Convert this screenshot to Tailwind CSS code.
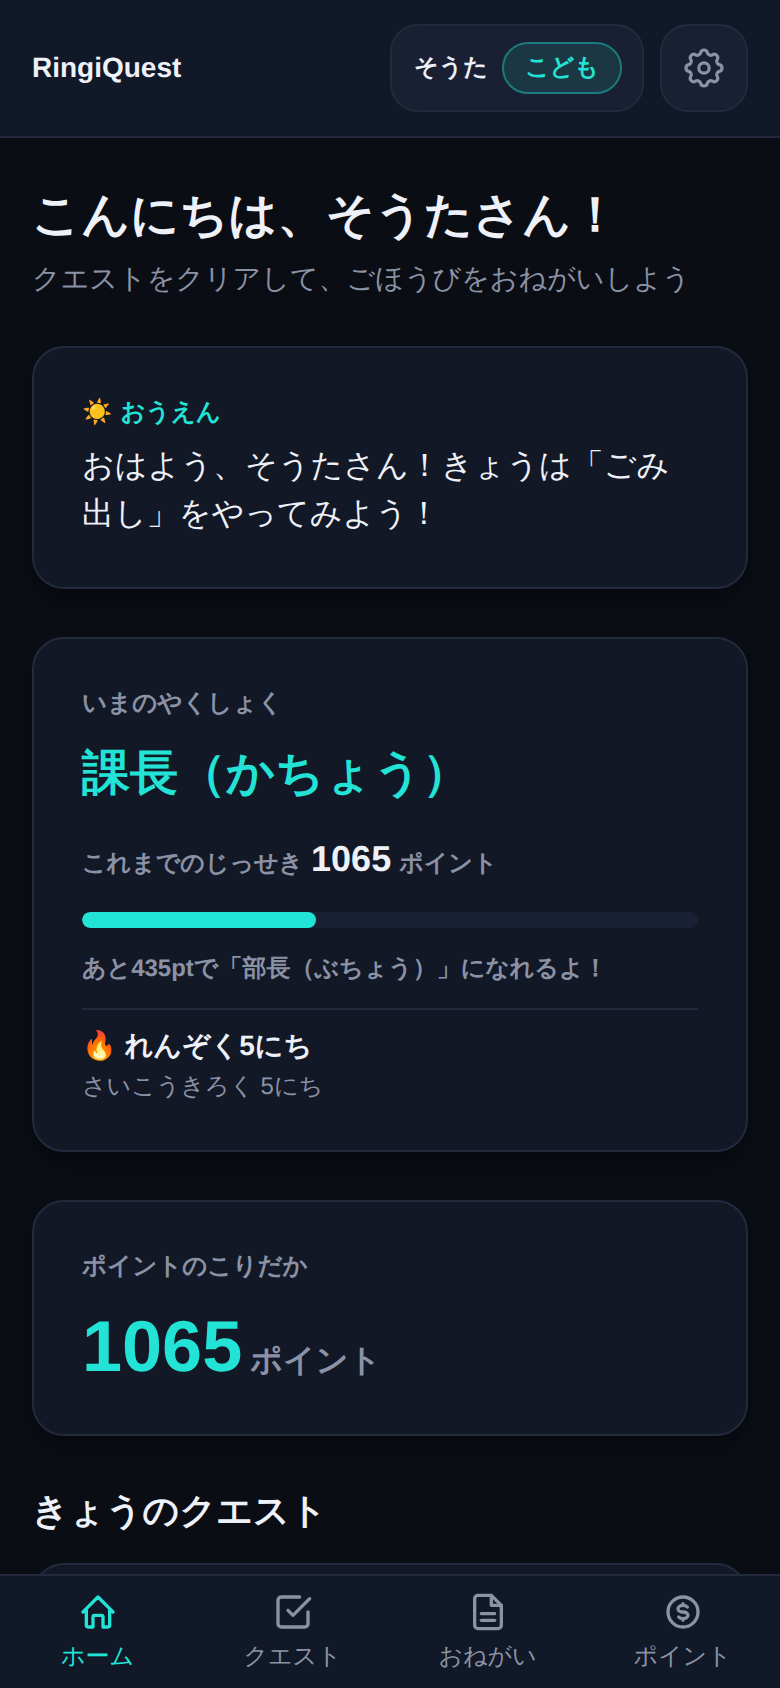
<!DOCTYPE html>
<html lang="ja">
<head>
<meta charset="utf-8">
<script src="https://cdn.jsdelivr.net/npm/@tailwindcss/browser@4"></script>
</head>
<body class="h-[1688px] overflow-hidden bg-[#0a0d14] text-[#eef1f8] font-['Liberation_Sans',sans-serif] [text-rendering:geometricPrecision]">
<header class="h-[138px] flex items-center justify-between px-8 bg-[#111827] border-b-2 border-[#232a3d]">
  <div class="text-[28px] font-bold">RingiQuest</div>
  <div class="flex gap-4">
    <div class="h-[88px] w-[254px] flex items-center justify-between pl-[22px] pr-[20px] rounded-[28px] bg-[#1a2033] border-2 border-[#232a3d]">
      <span class="text-2xl font-semibold">そうた</span>
      <span class="h-[52px] w-[120px] flex items-center justify-center rounded-full bg-[#1b3744] border-2 border-[#1d7a7c] text-2xl font-semibold text-[#22e3d6]">こども</span>
    </div>
    <button class="w-[88px] h-[88px] flex items-center justify-center rounded-[28px] bg-[#1a2033] border-2 border-[#232a3d] text-[#8b92a5]">
      <svg class="w-12 h-12" viewBox="0 0 24 24" fill="none" stroke="currentColor" stroke-width="1.6" stroke-linecap="round" stroke-linejoin="round"><path d="M10.325 4.317c.426-1.756 2.924-1.756 3.35 0a1.724 1.724 0 002.573 1.066c1.543-.94 3.31.826 2.37 2.37a1.724 1.724 0 001.065 2.572c1.756.426 1.756 2.924 0 3.35a1.724 1.724 0 00-1.066 2.573c.94 1.543-.826 3.31-2.37 2.37a1.724 1.724 0 00-2.572 1.065c-.426 1.756-2.924 1.756-3.35 0a1.724 1.724 0 00-2.573-1.066c-1.543.94-3.31-.826-2.37-2.37a1.724 1.724 0 00-1.065-2.572c-1.756-.426-1.756-2.924 0-3.35a1.724 1.724 0 001.066-2.573c-.94-1.543.826-3.31 2.37-2.37.996.608 2.296.07 2.572-1.065z"/><circle cx="12" cy="12" r="2.6"/></svg>
    </button>
  </div>
</header>
<main class="px-8 pt-[41px]">
  <h1 class="text-[48px] leading-[73px] font-bold">こんにちは、そうたさん！</h1>
  <p class="text-[28px] leading-[44px] text-[#8b92a5] mt-[5px]">クエストをクリアして、ごほうびをおねがいしよう</p>

  <section class="mt-[45px] rounded-[32px] bg-[#121826] border-2 border-[#232a3d] pt-[47px] px-12 pb-[50px] shadow-xl shadow-black/20">
    <div class="flex items-center gap-2 text-[24.5px] leading-9 font-semibold text-[#22e3d6] mb-[10px]"><span>☀️</span><span>おうえん</span></div>
    <p class="text-[32px] leading-[48px]">おはよう、そうたさん！きょうは「ごみ出し」をやってみよう！</p>
  </section>

  <section class="mt-12 rounded-[32px] bg-[#121826] border-2 border-[#232a3d] pt-[47px] px-12 pb-[45px] shadow-xl shadow-black/20">
    <div class="text-[24.5px] leading-9 font-semibold text-[#8b92a5]">いまのやくしょく</div>
    <div class="mt-[10px] text-[48px] leading-[84px] font-bold text-[#22e3d6]">課長（かちょう）</div>
    <div class="mt-[19px] flex items-baseline gap-2 text-2xl font-semibold text-[#8b92a5]"><span>これまでのじっせき</span><span class="text-[36px] font-bold text-[#eef1f8]">1065</span><span>ポイント</span></div>
    <div class="mt-[29px] h-4 rounded-full bg-[#1a2033] overflow-hidden"><div class="h-full w-[38%] rounded-full bg-[#22e3d6]"></div></div>
    <div class="mt-[23px] text-2xl leading-9 font-semibold text-[#8b92a5]">あと435ptで「部長（ぶちょう）」になれるよ！</div>
    <div class="mt-[21px] pt-[15px] border-t-2 border-[#232a3d]">
      <div class="text-[28px] leading-[42px] font-bold">🔥 れんぞく5にち</div>
      <div class="mt-[2px] text-2xl leading-9 text-[#8b92a5]">さいこうきろく 5にち</div>
    </div>
  </section>

  <section class="mt-12 rounded-[32px] bg-[#121826] border-2 border-[#232a3d] pt-[47px] px-12 pb-[45px] shadow-xl shadow-black/20">
    <div class="text-[24.5px] leading-9 font-semibold text-[#8b92a5]">ポイントのこりだか</div>
    <div class="mt-[21px] flex items-baseline gap-2"><span class="text-[72px] leading-[83px] font-bold text-[#22e3d6]">1065</span><span class="text-[32px] font-semibold text-[#8b92a5]">ポイント</span></div>
  </section>

  <h2 class="mt-12 text-[36px] leading-[54px] font-bold">きょうのクエスト</h2>
  <section class="mt-[25px] h-[300px] rounded-[32px] bg-[#121826] border-2 border-[#232a3d]"></section>
</main>
<nav class="fixed bottom-0 left-0 right-0 h-[114px] grid grid-cols-4 bg-[#111827] border-t-2 border-[#232a3d] text-[#8b92a5] text-2xl leading-9">
  <a class="flex flex-col items-center pt-4 text-[#22e3d6]">
    <svg class="w-10 h-10" viewBox="0 0 24 24" fill="none" stroke="currentColor" stroke-width="2" stroke-linecap="round" stroke-linejoin="round"><path d="M3 12l2-2m0 0l7-7 7 7M5 10v10a1 1 0 0 0 1 1h3v-6a1 1 0 0 1 1-1h4a1 1 0 0 1 1 1v6h3a1 1 0 0 0 1-1V10m0 0l2 2"/></svg>
    <span class="mt-[7px]">ホーム</span>
  </a>
  <a class="flex flex-col items-center pt-4">
    <svg class="w-10 h-10" viewBox="0 0 24 24" fill="none" stroke="currentColor" stroke-width="2" stroke-linecap="round" stroke-linejoin="round"><path d="M9 11l3 3L22 4"/><path d="M21 12v7a2 2 0 0 1-2 2H5a2 2 0 0 1-2-2V5a2 2 0 0 1 2-2h11"/></svg>
    <span class="mt-[7px]">クエスト</span>
  </a>
  <a class="flex flex-col items-center pt-4">
    <svg class="w-10 h-10" viewBox="0 0 24 24" fill="none" stroke="currentColor" stroke-width="2" stroke-linecap="round" stroke-linejoin="round"><path d="M14 2H6a2 2 0 0 0-2 2v16a2 2 0 0 0 2 2h12a2 2 0 0 0 2-2V8z"/><path d="M14 2v6h6"/><path d="M16 13H8"/><path d="M16 17H8"/></svg>
    <span class="mt-[7px]">おねがい</span>
  </a>
  <a class="flex flex-col items-center pt-4">
    <svg class="w-10 h-10" viewBox="0 0 24 24" fill="none" stroke="currentColor" stroke-width="2" stroke-linecap="round" stroke-linejoin="round"><path d="M12 8c-1.657 0-3 .895-3 2s1.343 2 3 2 3 .895 3 2-1.343 2-3 2m0-8c1.11 0 2.08.402 2.599 1M12 8V7m0 9v1m0-1c-1.11 0-2.08-.402-2.599-1M21 12a9 9 0 11-18 0 9 9 0 0118 0z"/></svg>
    <span class="mt-[7px]">ポイント</span>
  </a>
</nav>
</body>
</html>
